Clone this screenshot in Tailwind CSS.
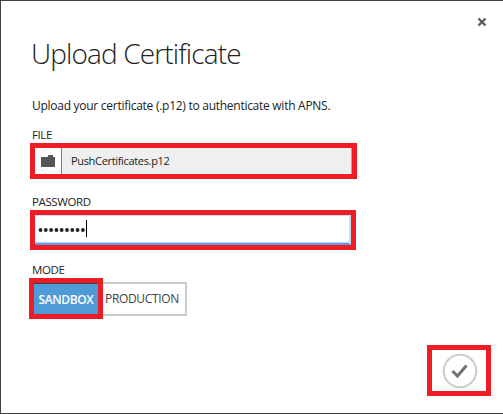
<!DOCTYPE html>
<html lang="en">
<head>
<meta charset="utf-8">
<title>Upload Certificate</title>
<script src="https://cdn.jsdelivr.net/npm/@tailwindcss/browser@4"></script>
</head>
<body class="bg-white">
<main class="relative flex h-[414px] w-[503px] flex-col items-start overflow-hidden border-t border-b border-l border-[#414042] bg-white pl-[29px] font-['Open_Sans','Noto_Sans',sans-serif] text-[#222]">
  <button aria-label="Close" class="absolute top-[16px] right-[16px] h-[10px] w-[10px]">
    <svg class="block" width="10" height="10" viewBox="0 0 10 10"><path d="M1.5 1.5 8.5 8.5M8.5 1.5 1.5 8.5" stroke="#5c5c5c" stroke-width="2.4" fill="none"/></svg>
  </button>
  <h1 class="mt-[32px] ml-[1px] h-[40px] text-[28px] leading-[40px] font-light tracking-[-0.87px] whitespace-nowrap">Upload Certificate</h1>
  <p class="mt-[23px] ml-[2px] h-[20px] text-[12px] leading-[20px] tracking-[-0.27px] whitespace-nowrap">Upload your certificate (.p12) to authenticate with APNS.</p>
  <label class="mt-[11px] ml-[2px] h-[16px] text-[11.5px] leading-[15px] font-medium tracking-[-0.4px]">FILE</label>
  <div class="mt-[0px] flex h-[36px] w-[327px] border-5 border-[#ee1c24] bg-[#efefef]">
    <div class="flex w-[27px] items-center justify-center border-r border-[#808080] bg-white">
      <svg width="14" height="12" viewBox="0 0 14 12"><path d="M0 2h6.500l1-2h4.500v2h2v10H0z" fill="#555"/></svg>
    </div>
    <span class="flex-1 border-r border-[#aaa] pl-[9px] text-[11px] leading-[26px] tracking-[-0.33px]">PushCertificates.p12</span>
  </div>
  <label class="mt-[15px] ml-[2px] h-[16px] text-[11.5px] leading-[16px] font-medium tracking-[-0.4px]">PASSWORD</label>
  <div class="h-[40px] w-[326px] border-5 border-[#ee1c24]">
    <div class="flex h-[30px] items-center border-t border-r-2 border-b-2 border-t-[#c6dcf5] border-r-[#c6dff8] border-b-[#5c9ee0] pl-[3px] shadow-[inset_0_-1px_0_#b5d7f7]">
      <svg width="48" height="6" viewBox="0 0 48 6" fill="#222"><circle cx="2.500" cy="3" r="1.900"/><circle cx="7.800" cy="3" r="1.900"/><circle cx="13.100" cy="3" r="1.900"/><circle cx="18.400" cy="3" r="1.900"/><circle cx="23.700" cy="3" r="1.900"/><circle cx="29" cy="3" r="1.900"/><circle cx="34.300" cy="3" r="1.900"/><circle cx="39.600" cy="3" r="1.900"/><circle cx="44.900" cy="3" r="1.900"/></svg>
      <span class="mb-[2px] h-[17px] w-px bg-black"></span>
    </div>
  </div>
  <label class="mt-[12px] ml-[2px] h-[16px] text-[11.5px] leading-[16px] font-medium tracking-[-0.4px]">MODE</label>
  <div class="-ml-px flex h-[41px] items-center text-[12px] whitespace-nowrap">
    <div class="h-[41px] w-[74px] border-5 border-[#ee1c24]"><div class="flex h-[31px] items-center justify-center border-t border-[#414042] bg-[#4f9bd8] pt-px text-[12px] font-semibold tracking-[-0.4px] text-white">SANDBOX</div></div>
    <div class="flex h-[34px] w-[84px] items-center justify-center border-2 border-l-0 border-[#ccc] pt-px pr-[4px] text-[12px] tracking-[-0.35px] text-[#444]">PRODUCTION</div>
  </div>
  <div class="mt-[26px] ml-[397px] flex h-[51px] w-[64px] items-center justify-center border-5 border-[#ee1c24]">
    <svg class="ml-[2px] block" width="36" height="36" viewBox="0 0 36 36" fill="none"><circle cx="18" cy="18" r="16.200" stroke="#ccc" stroke-width="2"/><path d="M10.500 18 15.500 23 24.500 12.500" stroke="#737373" stroke-width="3"/></svg>
  </div>
</main>
</body>
</html>
